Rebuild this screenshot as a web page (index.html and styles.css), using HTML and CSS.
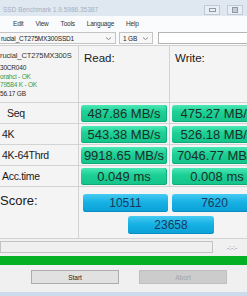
FILE: index.html
```html
<!DOCTYPE html>
<html lang="en">
<head>
  <meta charset="UTF-8">
  <title>AS SSD Benchmark</title>
  <link rel="stylesheet" href="styles.css">
</head>
<body>
  <div class="window">
    <div class="titlebar">
      <span class="title">SSD Benchmark 1.9.5986.35387</span>
      <div class="winbtns">
        <span class="wb"><span class="min"></span></span>
        <span class="wb"><span class="max"></span></span>
      </div>
    </div>

    <div class="menubar">
      <span>Edit</span>
      <span>View</span>
      <span>Tools</span>
      <span>Language</span>
      <span>Help</span>
    </div>

    <div class="toolbar">
      <div class="combo drive">
        <span>rucial_CT275MX300SSD1</span>
        <svg width="7" height="5" viewBox="0 0 7 5"><path d="M1 1.5 L3.5 3.5 L6 1.5" fill="none" stroke="#8a8a8a" stroke-width="1"/></svg>
      </div>
      <div class="combo size">
        <span>1 GB</span>
        <svg width="7" height="5" viewBox="0 0 7 5"><path d="M1 1.5 L3.5 3.5 L6 1.5" fill="none" stroke="#8a8a8a" stroke-width="1"/></svg>
      </div>
      <div class="textbox"></div>
    </div>

    <div class="results">
      <div class="cell info">
        <div class="model">rucial_CT275MX300S</div>
        <div class="line">30CR040</div>
        <div class="line ok">orahci - OK</div>
        <div class="line ok">79584 K - OK</div>
        <div class="line">56.17 GB</div>
      </div>
      <div class="cell head">Read:</div>
      <div class="cell head">Write:</div>

      <div class="cell label seq">Seq</div>
      <div class="cell"><div class="bar">487.86 MB/s</div></div>
      <div class="cell"><div class="bar">475.27 MB/s</div></div>

      <div class="cell label">4K</div>
      <div class="cell"><div class="bar">543.38 MB/s</div></div>
      <div class="cell"><div class="bar">526.18 MB/s</div></div>

      <div class="cell label">4K-64Thrd</div>
      <div class="cell"><div class="bar">9918.65 MB/s</div></div>
      <div class="cell"><div class="bar">7046.77 MB/s</div></div>

      <div class="cell label">Acc.time</div>
      <div class="cell"><div class="bar">0.049 ms</div></div>
      <div class="cell"><div class="bar">0.008 ms</div></div>

      <div class="cell score-label">Score:</div>
      <div class="cell scores">
        <div class="score-row">
          <div class="score">10511</div>
          <div class="score">7620</div>
        </div>
        <div class="score total">23658</div>
      </div>
    </div>

    <div class="status">
      <div class="progressbox"></div>
      <span class="time">-:-:-</span>
    </div>
    <div class="progress"></div>

    <div class="buttons">
      <button class="btn">Start</button>
      <button class="btn" disabled>Abort</button>
    </div>
    <div class="bottom"></div>
  </div>
</body>
</html>
```

FILE: styles.css
```css
html, body {
  margin: 0;
  width: 247px;
  height: 296px;
  overflow: hidden;
}
body {
  font-family: "Liberation Sans", Arial, sans-serif;
  background: #f0f0f0;
  color: #1a1a1a;
}
.window {
  width: 247px;
  height: 296px;
  overflow: hidden;
}

/* title bar */
.titlebar {
  height: 16px;
  background: #dfe8f1;
  display: flex;
  align-items: center;
  justify-content: space-between;
}
.title {
  font-size: 6.5px;
  color: #9fb0c2;
  padding-left: 3px;
  padding-top: 2px;
}
.winbtns {
  display: flex;
  gap: 7px;
  padding-right: 4px;
  padding-top: 4px;
}
.wb {
  width: 14px;
  height: 8px;
  border: 1px solid #bfcad6;
  background: #e8eef4;
  display: flex;
  align-items: center;
  justify-content: center;
}
.min {
  width: 5px;
  height: 2px;
  border: 1px solid #8d9aa8;
}
.max {
  width: 4px;
  height: 4px;
  border: 1px solid #8d9aa8;
  background: #c4ccd4;
}

/* menu */
.menubar {
  height: 15px;
  background: #fafbfc;
  display: flex;
  align-items: center;
  gap: 12px;
  padding-left: 13px;
  font-size: 6.5px;
  letter-spacing: -0.2px;
  color: #333;
}

/* toolbar */
.toolbar {
  height: 15px;
  background: #fafbfc;
  border-bottom: 1px solid #d0d0d0;
  display: flex;
  align-items: center;
  gap: 3px;
  box-sizing: border-box;
}
.combo {
  height: 12px;
  box-sizing: border-box;
  border: 1px solid #c4c4c4;
  background: #f7f7f7;
  display: flex;
  align-items: center;
  justify-content: space-between;
  padding: 0 3px 0 1px;
  font-size: 6.5px;
  letter-spacing: -0.15px;
  color: #222;
}
.combo.drive {
  width: 117px;
  margin-left: -1px;
}
.combo.size {
  width: 34px;
  padding-left: 3px;
}
.textbox {
  flex: 1;
  height: 12px;
  margin-left: 2px;
  box-sizing: border-box;
  border: 1px solid #b4b4b4;
  border-right: none;
  background: #fff;
}

/* results grid */
.results {
  display: grid;
  grid-template-columns: 79px 91px 95px;
  grid-template-rows: 57px 21px 21px 21px 21px 52px;
  background: #f4f4f4;
}
.cell {
  box-sizing: border-box;
  border-right: 1px solid #d3d3d3;
  border-bottom: 1px solid #d3d3d3;
  min-width: 0;
}
.info {
  padding-top: 5px;
  overflow: hidden;
  white-space: nowrap;
}
.model {
  font-size: 7.5px;
  letter-spacing: -0.1px;
  color: #333;
  height: 13px;
}
.line {
  font-size: 6.5px;
  letter-spacing: -0.2px;
  line-height: 8.5px;
  color: #2a2a2a;
}
.line.ok {
  color: #3a9a3a;
}
.head {
  font-size: 11.5px;
  padding: 6px 0 0 5px;
  color: #1a1a1a;
}
.label {
  font-size: 10.5px;
  letter-spacing: -0.3px;
  display: flex;
  align-items: center;
  padding-left: 2px;
}
.label.seq {
  padding-left: 7px;
}
.bar {
  margin: 2px 2px 0 2px;
  height: 17px;
  border-radius: 3px;
  background: linear-gradient(#4be7b5, #1dd096 40%, #14c389);
  box-shadow: inset 0 -1px 0 #0fa878, inset -1px 0 0 #11b07f;
  display: flex;
  align-items: center;
  justify-content: center;
  font-size: 13px;
  color: #1b2f27;
  white-space: nowrap;
}
.score-label {
  font-size: 13px;
  padding-top: 6px;
  padding-left: 0;
}
.scores {
  grid-column: span 2;
  padding: 7px 0 0 4px;
  display: flex;
  flex-direction: column;
  gap: 4px;
  border-right: none;
}
.score-row {
  display: flex;
  gap: 4px;
}
.score {
  width: 85px;
  height: 18px;
  flex: none;
  border-radius: 3px;
  background: linear-gradient(#46cbf2, #17b1e4 45%, #0ba0d7);
  box-shadow: inset 0 -1px 0 #0a8ec2;
  display: flex;
  align-items: center;
  justify-content: center;
  font-size: 12px;
  color: #173a5e;
}
.score.total {
  margin-left: 45px;
  width: 86px;
}

/* status */
.status {
  display: flex;
  align-items: center;
  height: 14px;
  margin-top: 1px;
}
.progressbox {
  width: 213px;
  height: 12px;
  box-sizing: border-box;
  border: 1px solid #c2c2c2;
  background: #efefef;
}
.time {
  margin-left: 14px;
  font-size: 6.5px;
  color: #8a8a8a;
}
.progress {
  height: 9px;
  margin-top: 2px;
  background: #06b025;
}
.buttons {
  display: flex;
  gap: 20px;
  padding-left: 31px;
  margin-top: 5px;
}
.btn {
  width: 88px;
  height: 14px;
  padding: 0;
  border: 1px solid #adadad;
  background: #e1e1e1;
  font-family: "Liberation Sans", Arial, sans-serif;
  font-size: 6.5px;
  color: #222;
}
.btn:disabled {
  background: #cccccc;
  border-color: #bfbfbf;
  color: #a3a3a3;
}
.bottom {
  height: 4px;
  margin-top: 8px;
  background: #cddbea;
}
```
